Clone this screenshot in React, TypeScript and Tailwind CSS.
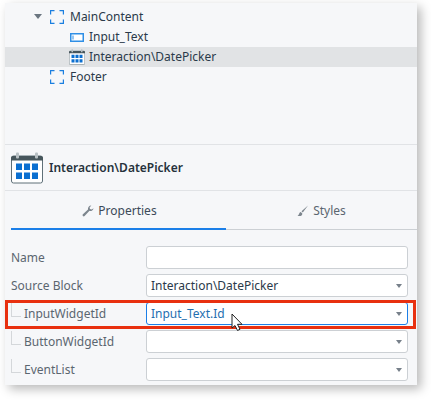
import React from 'react';

function Bracket() {
  return (
    <svg width="14" height="14" viewBox="0 0 14 14" fill="none" stroke="#1b7fe0" strokeWidth="1.2" className="shrink-0">
      <path d="M.6 4.500V.6h3.900M9.500 .6h3.900v3.900M13.400 9.500v3.900H9.500M4.500 13.400H.6V9.500" />
    </svg>
  );
}

function InputIcon() {
  return (
    <svg width="14" height="9" viewBox="0 0 14 9" className="shrink-0">
      <rect x=".75" y=".75" width="12.5" height="7.5" fill="#fff" stroke="#2f8fe6" strokeWidth="1.5" />
      <path d="M3 2.500v4" stroke="#2f8fe6" />
    </svg>
  );
}

function CalendarIcon({ size }: { size: number }) {
  return (
    <svg width={size} height={size} viewBox="0 0 32 31" className="shrink-0">
      <rect x=".5" y="3.500" width="31" height="27" rx="2" fill="#fff" stroke="#5f7078" />
      <path d="M0 5.500a2 2 0 0 1 2-2h28a2 2 0 0 1 2 2V8H0z" fill="#47565c" />
      <rect x="5" y="0" width="3" height="6" rx="1" fill="#b8c0c4" />
      <rect x="24" y="0" width="3" height="6" rx="1" fill="#b8c0c4" />
      {[5, 13, 21].map((x) =>
        [11, 20].map((y) => <rect key={`${x}-${y}`} x={x} y={y} width="6" height="6.5" fill="#0b6fd0" />),
      )}
    </svg>
  );
}

function TreeRow({ indent, icon, label, selected, caret }: { indent: string; icon: React.ReactNode; label: string; selected?: boolean; caret?: boolean }) {
  return (
    <div className={`relative flex h-5 items-center ${indent} ${selected ? 'bg-[#e1e3e5]' : ''}`}>
      {caret && <span className="absolute left-[29px] top-[7px] h-0 w-0 border-x-[4px] border-t-[5px] border-x-transparent border-t-[#6b7680]" />}
      {icon}
      <span className="text-[#2b3a4a]">{label}</span>
    </div>
  );
}

function Field({ label, value, nested, select, focused }: { label: string; value?: string; nested?: boolean; select?: boolean; focused?: boolean }) {
  return (
    <div className="flex h-[23px] items-center pr-[9px]">
      <div className="relative flex w-[141px] shrink-0 items-center pl-[6px] text-[#5b6670]">
        {nested && <span className="absolute left-[6px] top-[-5px] h-[14px] w-[10px] border-b border-l border-[#d4d7da]" />}
        <span className={nested ? 'pl-[13px]' : ''}>{label}</span>
      </div>
      <div className={`relative flex h-[23px] flex-1 items-center rounded-[3px] border bg-white pl-[4px] pt-[1px] ${focused ? 'border-[#1b7fe8] text-[#1f6fb0]' : 'border-[#ccd0d4] text-[#2b3a4a]'}`}>
        {value}
        {select && <span className="absolute right-[5px] top-[9px] h-0 w-0 border-x-[3px] border-t-[4px] border-x-transparent border-t-[#77808a]" />}
      </div>
    </div>
  );
}

export default function App() {
  return (
    <div className="h-[400px] w-[431px] overflow-hidden bg-white font-['Noto_Sans',sans-serif] text-[12px] leading-none">
      <div className="relative ml-[5px] mt-[3px] flex h-[382px] w-[412px] flex-col bg-[#f6f7f9] shadow-[4px_4px_10px_rgba(0,0,0,0.28)]">
        <div className="h-[141px] pt-[4px]">
          <TreeRow indent="pl-[45px] gap-[6px]" caret icon={<Bracket />} label="MainContent" />
          <TreeRow indent="pl-[65px] gap-[5px]" icon={<InputIcon />} label="Input_Text" />
          <TreeRow indent="pl-[64px] gap-[4px]" selected icon={<CalendarIcon size={16} />} label="Interaction\DatePicker" />
          <TreeRow indent="pl-[45px] gap-[6px]" icon={<Bracket />} label="Footer" />
        </div>

        <div className="flex h-[47px] items-center gap-[6px] border-y border-[#e1e3e6] pl-[6px] font-semibold text-[#26323c]">
          <CalendarIcon size={32} />
          <span>Interaction\DatePicker</span>
        </div>

        <div className="ml-[6px] flex h-[39px]">
          <div className="flex w-[215px] items-center justify-center gap-[4px] border-b-2 border-[#1b7fe8] pl-[2px] pt-[2px] text-[#3c4a58]">
            <svg width="12" height="12" viewBox="0 0 12 12" fill="#7d868e"><path d="M11.500 3.200a3 3 0 0 1-4 2.600L2.600 11a1.200 1.200 0 0 1-1.700-1.700L6 4.400A3.200 3.200 0 0 1 9.300.6L7.600 2.400l.4 1.600 1.700.4z" /></svg>
            Properties
          </div>
          <div className="flex flex-1 items-center justify-center gap-[4px] border-b border-[#ccd0d4] pt-[2px] text-[#5b6670]">
            <svg width="12" height="12" viewBox="0 0 12 12" fill="#7d868e"><path d="M11 .5 4.500 6.200l1.300 1.400zM3.800 7C2 7.300 2.600 9.800 .5 10.500c2 1.200 5 .5 4.800-2.100z" /></svg>
            Styles
          </div>
        </div>

        <div className="flex flex-col gap-[5px] pt-[16px]">
          <Field label="Name" />
          <Field label="Source Block" value="Interaction\DatePicker" select />
          <Field label="InputWidgetId" value="Input_Text.Id" select nested focused />
          <Field label="ButtonWidgetId" select nested />
          <Field label="EventList" select nested />
        </div>

        <div className="absolute left-0 top-[297px] h-[29px] w-[411px] border-[3px] border-[#e8300f]" />
        <svg className="absolute left-[226px] top-[310px]" width="13" height="20" viewBox="0 0 13 20">
          <path d="M1 1v14l3-2.500 2.500 5 2.500-1.200-2.500-5H11z" fill="#fff" stroke="#222" strokeWidth="1" />
        </svg>
      </div>
    </div>
  );
}
